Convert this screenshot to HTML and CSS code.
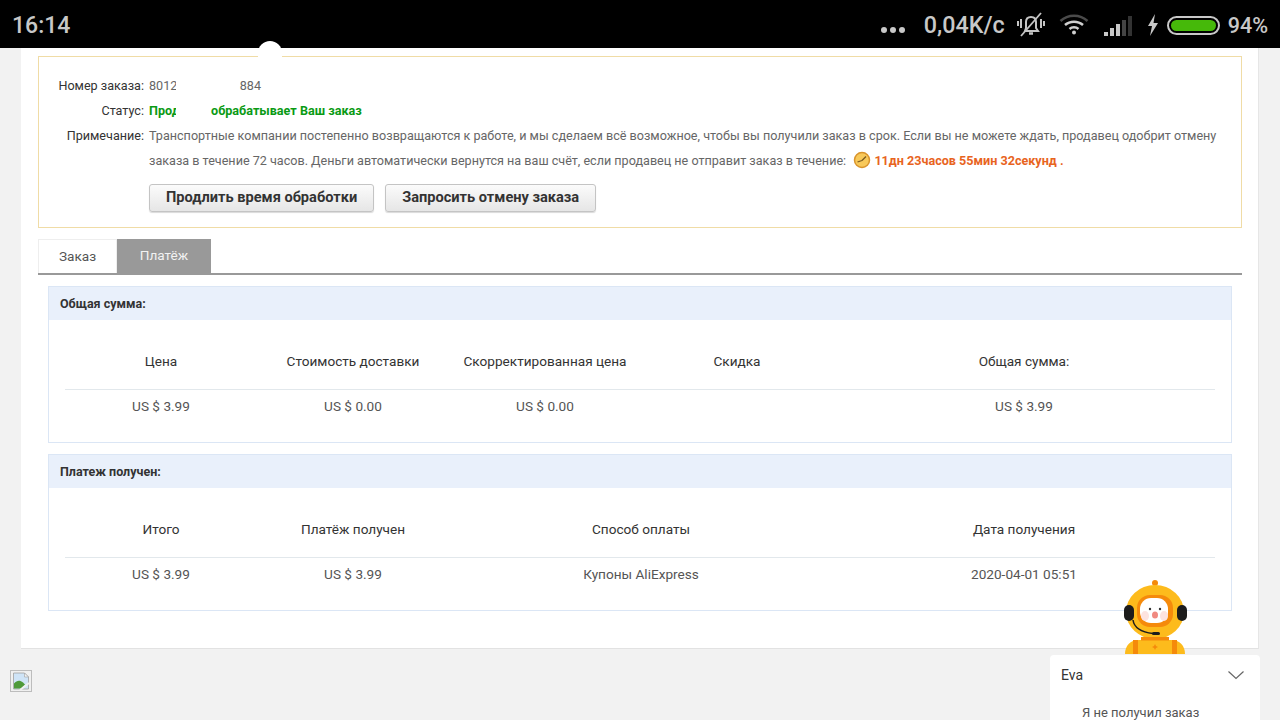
FILE: index.html
```html
<!DOCTYPE html>
<html lang="ru">
<head>
<meta charset="utf-8">
<title>Заказ</title>
<link rel="stylesheet" href="styles.css">
</head>
<body>
<header class="statusbar">
  <span class="time">16:14</span>
  <div class="status-right">
    <span class="dots"><i></i><i></i><i></i></span>
    <span class="speed">0,04K/c</span>
    <svg class="ic-bell" width="30" height="28" viewBox="0 0 30 28" fill="none" stroke="#c4c4c4" stroke-width="2"><path d="M9 20h13l-2-3v-6c0-3-2-5-5-5s-5 2-5 5v6z"/><path d="M13 22.500h4" stroke-width="2.500"/><path d="M5 8v9M2 10v5M25 8v9M28 10v5"/><path d="M5 25L25 2" stroke-width="1.800"/></svg>
    <svg class="ic-wifi" width="30" height="22" viewBox="0 0 30 22" fill="none"><path d="M1.500 8C9 1 21 1 28.500 8" stroke="#4a4a4a" stroke-width="2.500"/><path d="M6 12c5-4.500 13-4.500 18 0" stroke="#d0d0d0" stroke-width="2.500"/><path d="M10.500 16c2.500-2.200 6.500-2.200 9 0" stroke="#d0d0d0" stroke-width="2.500"/><circle cx="15" cy="19.500" r="2" fill="#d0d0d0"/></svg>
    <svg class="ic-signal" width="29" height="21" viewBox="0 0 29 21"><rect x="0" y="17" width="4" height="4" fill="#c8c8c8"/><rect x="6" y="13" width="4" height="8" fill="#c8c8c8"/><rect x="12" y="9" width="4" height="12" fill="#c8c8c8"/><rect x="18" y="5" width="4" height="16" fill="#444"/><rect x="24" y="1" width="4" height="20" fill="#333"/></svg>
    <svg class="ic-bolt" width="12" height="22" viewBox="0 0 12 22"><path d="M8 0L1 12h4l-2 10 8-13H6.500z" fill="#c8c8c8"/></svg>
    <span class="battery"><span class="battery-fill"></span></span>
    <span class="percent">94%</span>
  </div>
</header>

<div class="page">
  <main class="card">
    <section class="notice">
      <div class="info-row"><span class="info-label">Номер заказа:</span><span class="info-val">8012&nbsp;&nbsp;&nbsp;&nbsp;&nbsp;&nbsp;&nbsp;&nbsp;&nbsp;&nbsp;&nbsp;&nbsp;&nbsp;&nbsp;&nbsp;&nbsp;&nbsp;&nbsp;&nbsp;&nbsp;884</span></div>
      <div class="info-row"><span class="info-label">Статус:</span><span class="info-status">Продавец обрабатывает Ваш заказ</span></div>
      <div class="info-row"><span class="info-label">Примечание:</span><span class="info-val note">Транспортные компании постепенно возвращаются к работе, и мы сделаем всё возможное, чтобы вы получили заказ в срок. Если вы не можете ждать, продавец одобрит отмену заказа в течение 72 часов. Деньги автоматически вернутся на ваш счёт, если продавец не отправит заказ в течение:
        <svg class="clock" width="18" height="18" viewBox="0 0 18 18"><circle cx="9" cy="9" r="7.500" fill="#f8c95a" stroke="#d9942c" stroke-width="1.500"/><path d="M9 9.500L4.500 11M9 9.500l4-4" stroke="#7a5a20" stroke-width="1.300"/></svg>
        <b class="timer">11дн 23часов 55мин 32секунд</b> <b class="timer">.</b></span></div>
      <div class="actions">
        <button class="btn">Продлить время обработки</button>
        <button class="btn">Запросить отмену заказа</button>
      </div>
    </section>

    <nav class="tabs">
      <span class="tab">Заказ</span>
      <span class="tab tab-active">Платёж</span>
    </nav>

    <section class="panel">
      <h2 class="panel-head">Общая сумма:</h2>
      <div class="table">
        <div class="grid grid-head">
          <span>Цена</span><span>Стоимость доставки</span><span>Скорректированная цена</span><span>Скидка</span><span>Общая сумма:</span>
        </div>
        <div class="grid grid-body">
          <span>US $ 3.99</span><span>US $ 0.00</span><span>US $ 0.00</span><span></span><span>US $ 3.99</span>
        </div>
      </div>
    </section>

    <section class="panel">
      <h2 class="panel-head">Платеж получен:</h2>
      <div class="table">
        <div class="grid grid-head">
          <span>Итого</span><span>Платёж получен</span><span class="wide">Способ оплаты</span><span>Дата получения</span>
        </div>
        <div class="grid grid-body">
          <span>US $ 3.99</span><span>US $ 3.99</span><span class="wide">Купоны AliExpress</span><span>2020-04-01 05:51</span>
        </div>
      </div>
    </section>
  </main>

  <div class="footer-row">
    <svg class="broken" width="22" height="22" viewBox="0 0 22 22"><rect x="0.500" y="0.500" width="21" height="21" fill="#f0f0f0" stroke="#bdbdbd"/><path d="M3.500 3h11l4 4v12h-15z" fill="#cfe4f7" stroke="#a0a0a0" stroke-width="0.800"/><path d="M14.500 3v4h4z" fill="#f4f4f4" stroke="#a0a0a0" stroke-width="0.600"/><path d="M4 18.500v-5c3-3.500 6-3.500 9-1l2 2-4 4z" fill="#4f9a3a"/><path d="M10 20l9-7" stroke="#f0f0f0" stroke-width="2"/></svg>
  </div>
</div>

<div class="scribble"></div>
<div class="scribble scribble-2"></div>

<svg class="robot" width="66" height="76" viewBox="0 0 66 76">
  <rect x="31.300" y="5" width="1.500" height="12" fill="#7a4a00"/>
  <circle cx="32" cy="4" r="3" fill="#f58a0b"/>
  <ellipse cx="32" cy="33" rx="29" ry="27" fill="#fdbb1c"/>
  <rect x="1" y="26" width="10" height="16" rx="5" fill="#1c1c1c"/>
  <rect x="54" y="26" width="10" height="16" rx="5" fill="#1c1c1c"/>
  <rect x="14" y="16" width="36" height="32" rx="13" fill="#f58a0b"/>
  <rect x="17" y="19" width="28" height="25" rx="11" fill="#fff"/>
  <ellipse cx="22" cy="37" rx="4" ry="5" fill="#fde3e0"/>
  <ellipse cx="41" cy="37" rx="4" ry="5" fill="#fde3e0"/>
  <circle cx="27" cy="30" r="1.200" fill="#333"/>
  <circle cx="37" cy="30" r="1.200" fill="#333"/>
  <ellipse cx="32" cy="36" rx="3" ry="3.500" fill="#f08a80"/>
  <path d="M10 41c1 7 7 12 20 13.500" fill="none" stroke="#1c1c1c" stroke-width="1.500"/>
  <rect x="29" y="53" width="8" height="3" rx="1.500" fill="#1c1c1c"/>
  <path d="M2 75c0-8 5-14 14-14h32c9 0 14 6 14 14z" fill="#fdbb1c"/>
  <rect x="18" y="58" width="28" height="3.500" fill="#f58a0b"/>
  <rect x="10" y="61" width="5" height="14" fill="#f58a0b"/>
  <rect x="49" y="61" width="5" height="14" fill="#f58a0b"/>
  <path d="M32 65l1 2 2 1-2 1-1 2-1-2-2-1 2-1z" fill="#f58a0b"/>
</svg>

<aside class="chat">
  <div class="chat-head">
    <span class="chat-name">Eva</span>
    <svg width="18" height="10" viewBox="0 0 18 10" fill="none" stroke="#666" stroke-width="1.200"><path d="M1.500 1.500L9 8.500l7.500-7"/></svg>
  </div>
  <p class="chat-msg">Я не получил заказ</p>
</aside>
```

FILE: styles.css
```css
* { box-sizing: border-box; }
html, body { margin: 0; height: 100%; }
body {
  width: 1280px;
  height: 720px;
  overflow: hidden;
  background: #f2f2f2;
  font-family: Roboto, "Liberation Sans", sans-serif;
  color: #333;
  position: relative;
}
.statusbar {
  height: 48px;
  background: #000;
  color: #c8c8c8;
  display: flex;
  align-items: center;
  justify-content: space-between;
  padding: 2px 12px 0 12px;
}
.time { font-size: 23px; font-weight: 500; }
.status-right { display: flex; align-items: center; }
.dots { display: flex; gap: 3px; margin-top: 9px; margin-right: 19px; }
.dots i { width: 6px; height: 6px; border-radius: 50%; background: #c8c8c8; }
.speed { font-size: 23.300px; font-weight: 500; margin-right: 11px; }
.ic-bell { margin-right: 13px; }
.ic-wifi { margin-right: 15px; margin-top: -2px; }
.ic-signal { margin-right: 14px; }
.ic-bolt { margin-right: 8px; }
.battery {
  width: 53px;
  height: 19px;
  border: 2px solid #c8c8c8;
  border-radius: 10px;
  padding: 2px;
  margin-right: 8px;
  display: flex;
}
.battery-fill { flex: 1; background: #46b90a; border-radius: 6px; }
.percent { font-size: 21.500px; font-weight: 500; }

.page { padding: 0 21px; }
.card {
  background: #fff;
  height: 601px;
  padding: 8px 16px 0 17px;
  border-right: 1px solid #e6e6e6;
  border-bottom: 1px solid #e2e2e2;
}
.notice {
  height: 172px;
  border: 1px solid #f0dca6;
  padding: 16px 0 0 0;
  font-size: 12.600px;
}
.info-row { display: flex; line-height: 25px; }
.info-label { width: 105px; flex: none; text-align: right; color: #333; margin-right: 5px; }
.info-val { color: #666; }
.note { width: 1075px; }
.info-status { color: #0a9a14; font-weight: 700; }
.clock { vertical-align: -4px; margin: 0 0 0 4px; }
.timer { color: #e8641e; }
.actions { display: flex; gap: 11px; margin: 11px 0 0 110px; }
.btn {
  height: 28px;
  padding: 0 16px 2px;
  border: 1px solid #c4c4c4;
  border-radius: 3px;
  background: linear-gradient(#fbfbfb, #e6e6e6);
  box-shadow: 0 1px 1px rgba(0,0,0,0.15);
  font: 700 14.600px Roboto, sans-serif;
  color: #333;
}
.tabs {
  display: flex;
  height: 36px;
  margin-top: 11px;
  border-bottom: 2px solid #999;
}
.tab {
  width: 79px;
  font-size: 13.600px;
  line-height: 33px;
  text-align: center;
  color: #555;
  border: 1px solid #eee;
  border-bottom: 0;
}
.tab-active { width: 94px; background: #999; color: #f2f2f2; border: 0; }
.panel {
  margin: 11px 10px 0;
  height: 157px;
  border: 1px solid #dbe6f5;
}
.panel-head {
  margin: 0;
  height: 33px;
  background: #e9f0fb;
  padding-left: 11px;
  font-size: 12.500px;
  line-height: 33px;
  font-weight: 700;
  color: #333;
}
.table { padding: 0 16px; font-size: 13.600px; color: #444; }
.grid {
  display: grid;
  grid-template-columns: 192px 192px 192px 192px 1fr;
  text-align: center;
}
.wide { grid-column: span 2; }
.grid-head { height: 70px; line-height: 83px; border-bottom: 1px solid #e2e8ec; color: #333; }
.grid-body { line-height: 33px; color: #555; }
.footer-row { padding: 21px 0 0 0; margin-left: -11px; }
.broken { display: block; }

.scribble {
  position: absolute;
  left: 258px;
  top: 41px;
  width: 24px;
  height: 26px;
  background: #fff;
  border-radius: 12px 12px 0 0;
}
.scribble-2 {
  left: 176px;
  top: 76px;
  width: 60px;
  height: 41px;
  border-radius: 0;
  clip-path: polygon(0 0, 100% 0, 100% 45%, 55% 45%, 55% 100%, 0 100%);
}
.robot { position: absolute; left: 1123px; top: 579px; }
.chat {
  position: absolute;
  left: 1050px;
  top: 655px;
  width: 210px;
  height: 65px;
  background: #fff;
  border-radius: 4px 4px 0 0;
  font-size: 14px;
}
.chat-head {
  display: flex;
  justify-content: space-between;
  align-items: center;
  padding: 7px 15px 0 11px;
  height: 32px;
}
.chat-name { color: #333; }
.chat-msg { margin: 18px 0 0 32px; font-size: 13px; color: #555; }
```
